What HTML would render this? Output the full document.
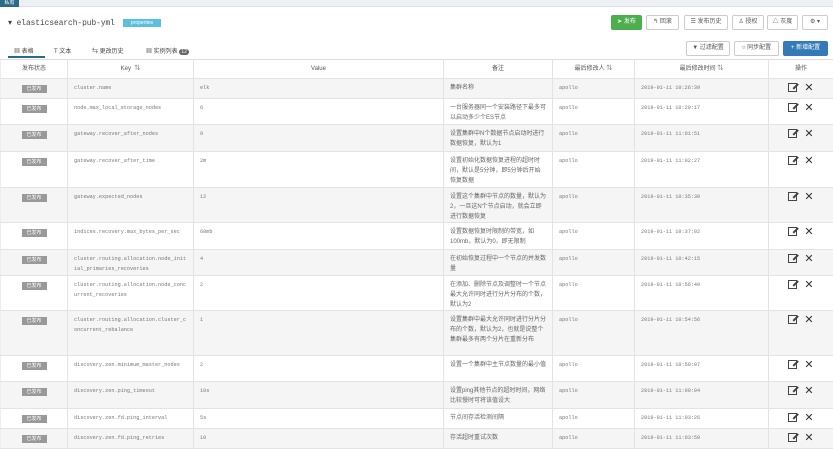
<!DOCTYPE html>
<html><head><meta charset="utf-8">
<style>
*{box-sizing:border-box;margin:0;padding:0}
body{width:833px;height:453px;overflow:hidden;background:#fff;font-family:"Liberation Sans","Noto Sans CJK SC",sans-serif;color:#555;font-size:7px;position:relative}
.a{position:absolute}
.topbar{left:0;top:0;width:833px;height:7px;background:#eef1f4;border-bottom:1px solid #dde}
.tag{left:0;top:0;width:19px;height:7px;background:#2d6a8a;color:#fff;font-size:5px;line-height:7px;text-align:center}
.title{left:8px;top:18px;font-family:"Liberation Mono",monospace;font-size:7.8px;color:#444}
.prop{left:123px;top:19px;width:38px;height:8px;background:#5bc0de;color:#fff;font-size:5px;line-height:8px;text-align:center}
.btn{height:15px;border:1px solid #ccc;border-radius:2px;background:#fff;font-size:6px;line-height:13px;text-align:center;color:#555}
.tabs{top:46px;font-size:6px;color:#444}
table{position:absolute;left:0;top:59px;width:833px;border-collapse:collapse;table-layout:fixed}
td,th{border:1px solid #e3e3e3;border-left-color:#eee;vertical-align:top;font-size:6px;padding:4px 6px 0;line-height:10px;overflow:hidden;color:#666}
th{font-weight:normal;text-align:center;height:18px;padding:4px 0;color:#555;border-top:1px solid #ddd}
tr:nth-child(even) td{background:#f5f5f5}
.st{text-align:center;padding-top:5px}
.st span{display:inline-block;width:25px;height:8px;background:#999;color:#fff;font-size:5px;line-height:8px}
.k{font-family:"Liberation Mono",monospace;font-size:5.2px;word-break:break-all;color:#777}
.op{text-align:center;padding-top:3px;font-size:11px;color:#333;line-height:12px}
.ed{display:inline-block;width:9px;height:9px;border:1.5px solid #444;margin-right:7px;vertical-align:-1px;position:relative}
.ed:after{content:"";position:absolute;left:2px;top:-1px;width:7px;height:1.5px;background:#444;transform:rotate(-45deg);transform-origin:right}
</style></head><body>
<div class="a topbar"></div><div class="a tag">私有</div>
<div class="a title">▾ elasticsearch-pub-yml</div>
<div class="a prop">properties</div>
<div class="a btn" style="left:611px;top:15px;width:31px;background:#4cae4c;border-color:#4cae4c;color:#fff">➤ 发布</div>
<div class="a btn" style="left:646px;top:15px;width:33px">↰ 回滚</div>
<div class="a btn" style="left:684px;top:15px;width:44px">☰ 发布历史</div>
<div class="a btn" style="left:732px;top:15px;width:32px">♙ 授权</div>
<div class="a btn" style="left:767px;top:15px;width:31px">△ 灰度</div>
<div class="a btn" style="left:802px;top:15px;width:26px">⚙ ▾</div>
<div class="a btn" style="left:686px;top:41px;width:44px">▼ 过滤配置</div>
<div class="a btn" style="left:734px;top:41px;width:45px">○ 同步配置</div>
<div class="a btn" style="left:783px;top:41px;width:45px;background:#337ab7;border-color:#337ab7;color:#fff">+ 新增配置</div>
<div class="a tabs" style="left:14px">▦ 表格</div>
<div class="a" style="left:8px;top:56px;width:37px;height:2px;background:#2d6a8a"></div>
<div class="a tabs" style="left:54px">T 文本</div>
<div class="a tabs" style="left:92px">⇆ 更改历史</div>
<div class="a tabs" style="left:146px">▦ 实例列表 <span style="background:#666;color:#fff;border-radius:4px;padding:0 2px;font-size:5px">12</span></div>
<table>
<colgroup><col style="width:67px"><col style="width:126px"><col style="width:250px"><col style="width:109px"><col style="width:82px"><col style="width:134px"><col style="width:65px"></colgroup>
<tr><th>发布状态</th><th>Key &nbsp;⇅</th><th>Value</th><th>备注</th><th>最后修改人 ⇅</th><th>最后修改时间 ⇅</th><th>操作</th></tr>
<tr style="height:20px"><td class="st"><span>已发布</span></td><td class="k">cluster.name</td><td class="k">elk</td><td>集群名称</td><td class="k">apollo</td><td class="k">2019-01-11 10:26:39</td><td class="op"><i class="ed"></i>✕</td></tr>
<tr style="height:26px"><td class="st"><span>已发布</span></td><td class="k">node.max_local_storage_nodes</td><td class="k">6</td><td>一台服务器同一个安装路径下最多可以启动多少个ES节点</td><td class="k">apollo</td><td class="k">2019-01-11 10:29:17</td><td class="op"><i class="ed"></i>✕</td></tr>
<tr style="height:27px"><td class="st"><span>已发布</span></td><td class="k">gateway.recover_after_nodes</td><td class="k">9</td><td>设置集群中N个数据节点启动时进行数据恢复，默认为1</td><td class="k">apollo</td><td class="k">2019-01-11 11:01:51</td><td class="op"><i class="ed"></i>✕</td></tr>
<tr style="height:36px"><td class="st"><span>已发布</span></td><td class="k">gateway.recover_after_time</td><td class="k">2m</td><td>设置初始化数据恢复进程的超时时间，默认是5分钟，即5分钟后开始恢复数据</td><td class="k">apollo</td><td class="k">2019-01-11 11:02:27</td><td class="op"><i class="ed"></i>✕</td></tr>
<tr style="height:35px"><td class="st"><span>已发布</span></td><td class="k">gateway.expected_nodes</td><td class="k">12</td><td>设置这个集群中节点的数量，默认为2，一旦这N个节点启动，就会立即进行数据恢复</td><td class="k">apollo</td><td class="k">2019-01-11 10:35:30</td><td class="op"><i class="ed"></i>✕</td></tr>
<tr style="height:27px"><td class="st"><span>已发布</span></td><td class="k">indices.recovery.max_bytes_per_sec</td><td class="k">60mb</td><td>设置数据恢复时限制的带宽，如100mb，默认为0，即无限制</td><td class="k">apollo</td><td class="k">2019-01-11 10:37:02</td><td class="op"><i class="ed"></i>✕</td></tr>
<tr style="height:26px"><td class="st"><span>已发布</span></td><td class="k">cluster.routing.allocation.node_initial_primaries_recoveries</td><td class="k">4</td><td>在初始恢复过程中一个节点的并发数量</td><td class="k">apollo</td><td class="k">2019-01-11 10:42:15</td><td class="op"><i class="ed"></i>✕</td></tr>
<tr style="height:35px"><td class="st"><span>已发布</span></td><td class="k">cluster.routing.allocation.node_concurrent_recoveries</td><td class="k">2</td><td>在添加、删除节点及调整时一个节点最大允许同时进行分片分布的个数，默认为2</td><td class="k">apollo</td><td class="k">2019-01-11 10:56:40</td><td class="op"><i class="ed"></i>✕</td></tr>
<tr style="height:45px"><td class="st"><span>已发布</span></td><td class="k">cluster.routing.allocation.cluster_concurrent_rebalance</td><td class="k">1</td><td>设置集群中最大允许同时进行分片分布的个数，默认为2，也就是说整个集群最多有两个分片在重新分布</td><td class="k">apollo</td><td class="k">2019-01-11 10:54:56</td><td class="op"><i class="ed"></i>✕</td></tr>
<tr style="height:26px"><td class="st"><span>已发布</span></td><td class="k">discovery.zen.minimum_master_nodes</td><td class="k">2</td><td>设置一个集群中主节点数量的最小值</td><td class="k">apollo</td><td class="k">2019-01-11 10:59:07</td><td class="op"><i class="ed"></i>✕</td></tr>
<tr style="height:27px"><td class="st"><span>已发布</span></td><td class="k">discovery.zen.ping_timeout</td><td class="k">10s</td><td>设置ping其他节点的超时时间，网络比较慢时可将该值设大</td><td class="k">apollo</td><td class="k">2019-01-11 11:00:04</td><td class="op"><i class="ed"></i>✕</td></tr>
<tr style="height:20px"><td class="st"><span>已发布</span></td><td class="k">discovery.zen.fd.ping_interval</td><td class="k">5s</td><td>节点间存活检测间隔</td><td class="k">apollo</td><td class="k">2019-01-11 11:03:26</td><td class="op"><i class="ed"></i>✕</td></tr>
<tr style="height:20px"><td class="st"><span>已发布</span></td><td class="k">discovery.zen.fd.ping_retries</td><td class="k">10</td><td>存活超时重试次数</td><td class="k">apollo</td><td class="k">2019-01-11 11:03:59</td><td class="op"><i class="ed"></i>✕</td></tr>
</table>
</body></html>
